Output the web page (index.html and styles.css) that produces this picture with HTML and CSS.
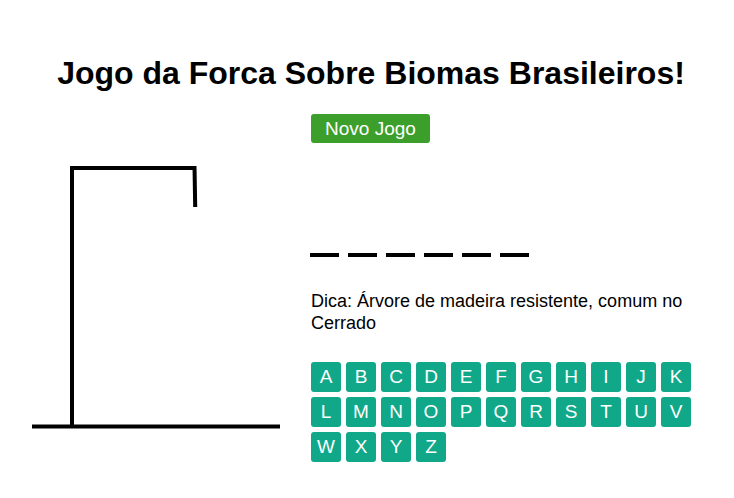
FILE: index.html
```html
<!DOCTYPE html>
<html lang="pt">
<head>
<meta charset="utf-8">
<title>Jogo da Forca</title>
<link rel="stylesheet" href="styles.css">
</head>
<body>
<h1 class="title">Jogo da Forca Sobre Biomas Brasileiros!</h1>
<div class="game">
  <svg class="gallows" width="311" height="330" viewBox="0 114 311 330">
    <g stroke="#000" stroke-width="4" fill="none" stroke-linecap="butt">
      <line x1="32" y1="426.5" x2="280" y2="426.5"/>
      <line x1="72" y1="426.5" x2="72" y2="166"/>
      <line x1="70" y1="168" x2="195" y2="168"/>
      <line x1="194.5" y1="166" x2="195.2" y2="207"/>
    </g>
  </svg>
  <div class="panel">
    <button class="new-game">Novo Jogo</button>
    <div class="word">
      <span class="slot"></span><span class="slot"></span><span class="slot"></span><span class="slot"></span><span class="slot"></span><span class="slot"></span>
    </div>
    <p class="hint">Dica: Árvore de madeira resistente, comum no Cerrado</p>
    <div class="letters">
      <button class="key">A</button><button class="key">B</button><button class="key">C</button><button class="key">D</button><button class="key">E</button><button class="key">F</button><button class="key">G</button><button class="key">H</button><button class="key">I</button><button class="key">J</button><button class="key">K</button>
      <button class="key">L</button><button class="key">M</button><button class="key">N</button><button class="key">O</button><button class="key">P</button><button class="key">Q</button><button class="key">R</button><button class="key">S</button><button class="key">T</button><button class="key">U</button><button class="key">V</button>
      <button class="key">W</button><button class="key">X</button><button class="key">Y</button><button class="key">Z</button>
    </div>
  </div>
</div>
</body>
</html>
```
FILE: styles.css
```css
html, body {
  margin: 0;
  padding: 0;
  background: #fff;
  font-family: "Liberation Sans", Arial, sans-serif;
  color: #000;
}

.title {
  margin: 0;
  padding: 55px 0 0 8px;
  height: 59px;
  text-align: center;
  font-size: 32px;
  font-weight: bold;
  line-height: 37px;
}

.game {
  display: flex;
  align-items: flex-start;
}

.gallows {
  display: block;
  flex: none;
}

.panel {
  width: 400px;
  display: flex;
  flex-direction: column;
  align-items: flex-start;
}

.new-game {
  width: 119px;
  height: 29px;
  padding: 0;
  border: none;
  border-radius: 3px;
  background: #3d9f2b;
  color: #fff;
  font-family: "Liberation Sans", Arial, sans-serif;
  font-size: 19px;
}

.word {
  display: flex;
  gap: 9px;
  margin-top: 110px;
  margin-left: -1px;
}

.slot {
  width: 29px;
  height: 4px;
  background: #000;
}

.hint {
  margin: 33px 0 0;
  font-size: 18px;
  line-height: 22px;
}

.letters {
  margin-top: 28px;
  display: flex;
  flex-wrap: wrap;
  gap: 5px;
  width: 390px;
}

.key {
  width: 30px;
  height: 30px;
  padding: 0;
  border: none;
  border-radius: 3px;
  background: #10a889;
  color: #fff;
  font-family: "Liberation Sans", Arial, sans-serif;
  font-size: 19px;
}
```
